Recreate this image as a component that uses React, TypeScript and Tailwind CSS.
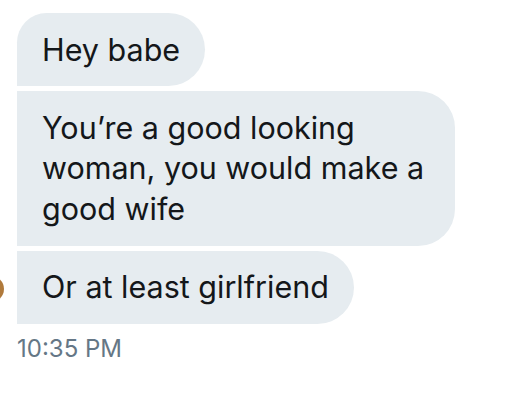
import React from "react";

export default function App() {
  return (
    <div className="w-[522px] h-[400px] bg-white relative overflow-hidden" style={{ fontFamily: "Inter, 'Noto Sans', sans-serif" }}>
      <div className="absolute left-[-22px] top-[276px] w-[26px] h-[26px] rounded-full bg-[#b07a3c]" />
      <div className="flex flex-col items-start pl-[17px] pt-[13px] gap-[5px]">
        <div className="bg-[#e6ecf0] text-[#14171a] text-[30.5px] leading-[40px] px-[25px] py-[16.5px] rounded-tl-[30px] rounded-r-[37px]">
          Hey babe
        </div>
        <div className="bg-[#e6ecf0] text-[#14171a] text-[30.5px] leading-[40.5px] px-[25px] py-[16.5px] rounded-r-[37px] w-[438px]">
          You’re a good looking woman, you would make a good wife
        </div>
        <div className="bg-[#e6ecf0] text-[#14171a] text-[30.5px] leading-[40px] px-[25px] py-[16.5px] rounded-r-[37px]">
          Or at least girlfriend
        </div>
        <div className="text-[#657786] text-[24px] leading-[28px] pt-[6px]">10:35 PM</div>
      </div>
    </div>
  );
}
